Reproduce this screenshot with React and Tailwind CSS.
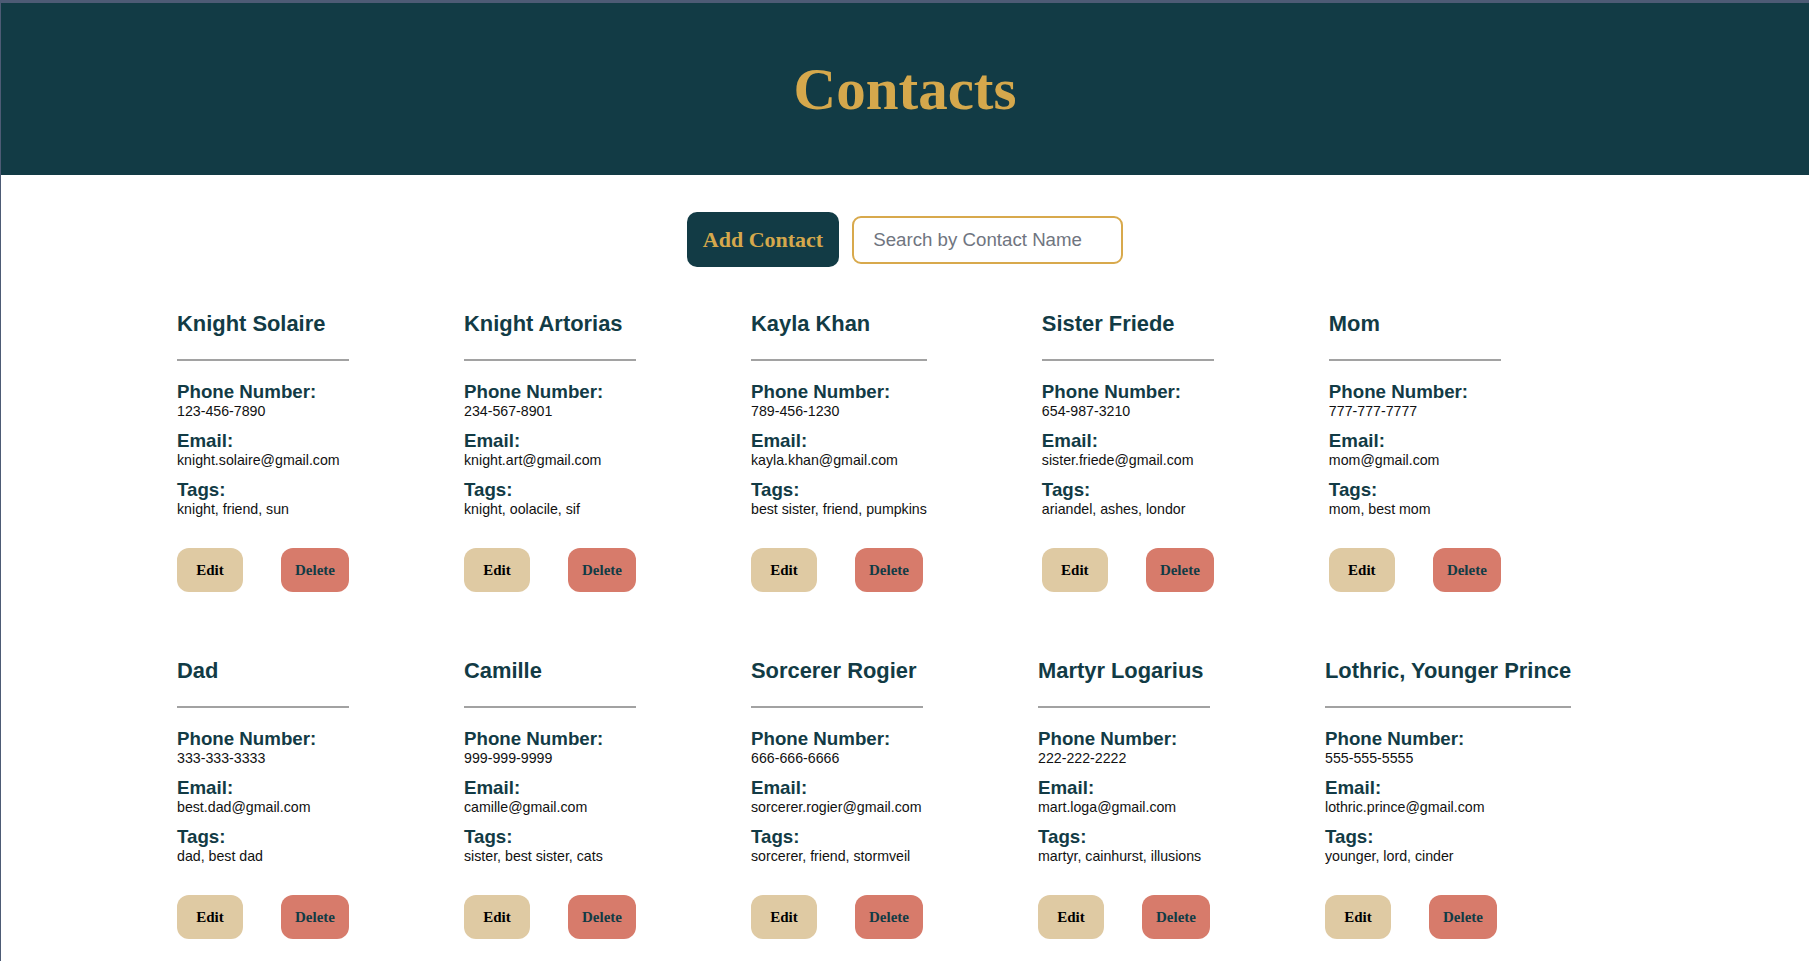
import React from 'react';

const contacts = [
  { id: 1, name: 'Knight Solaire', phone: '123-456-7890', email: 'knight.solaire@gmail.com', tags: ['knight', 'friend', 'sun'] },
  { id: 2, name: 'Knight Artorias', phone: '234-567-8901', email: 'knight.art@gmail.com', tags: ['knight', 'oolacile', 'sif'] },
  { id: 3, name: 'Kayla Khan', phone: '789-456-1230', email: 'kayla.khan@gmail.com', tags: ['best sister', 'friend', 'pumpkins'] },
  { id: 4, name: 'Sister Friede', phone: '654-987-3210', email: 'sister.friede@gmail.com', tags: ['ariandel', 'ashes', 'londor'] },
  { id: 5, name: 'Mom', phone: '777-777-7777', email: 'mom@gmail.com', tags: ['mom', 'best mom'] },
  { id: 6, name: 'Dad', phone: '333-333-3333', email: 'best.dad@gmail.com', tags: ['dad', 'best dad'] },
  { id: 7, name: 'Camille', phone: '999-999-9999', email: 'camille@gmail.com', tags: ['sister', 'best sister', 'cats'] },
  { id: 8, name: 'Sorcerer Rogier', phone: '666-666-6666', email: 'sorcerer.rogier@gmail.com', tags: ['sorcerer', 'friend', 'stormveil'] },
  { id: 9, name: 'Martyr Logarius', phone: '222-222-2222', email: 'mart.loga@gmail.com', tags: ['martyr', 'cainhurst', 'illusions'] },
  { id: 10, name: 'Lothric, Younger Prince', phone: '555-555-5555', email: 'lothric.prince@gmail.com', tags: ['younger', 'lord', 'cinder'] },
];

const Field = ({ label, value, first }) => (
  <div className={first ? 'mt-[19.5px]' : 'mt-[10px]'}>
    <h3 className="text-[18.72px] leading-[22px] font-bold text-[#123b45]">{label}</h3>
    <p className="text-[14.2px] leading-[17px] text-[#111]">{value}</p>
  </div>
);

const ContactCard = ({ contact }) => {
  return (
    <div className="flex flex-col">
      <h2 className="text-[21.9px] leading-[26px] font-bold text-[#123b45] whitespace-nowrap">{contact.name}</h2>
      <div className="mt-[22px] h-[2px] bg-[#a2a2a2]" />
      <Field first label="Phone Number:" value={contact.phone} />
      <Field label="Email:" value={contact.email} />
      <Field label="Tags:" value={contact.tags.join(', ')} />
      <div className="mt-[30.5px] flex gap-[38px]">
        <button className="w-[66px] h-[44px] rounded-[12px] bg-[#dfcaa3] text-black font-bold text-[15px] font-['Liberation_Serif',serif]">
          Edit
        </button>
        <button className="w-[68px] h-[44px] rounded-[12px] bg-[#d77b6b] text-[#123b45] font-bold text-[15px] font-['Liberation_Serif',serif]">
          Delete
        </button>
      </div>
    </div>
  );
};

export default function App() {
  return (
    <div className="min-h-screen bg-white border-t-[3px] border-l border-[#4d5b75] font-['Liberation_Sans',Arial,sans-serif]">
      {/* Header */}
      <header className="h-[172px] bg-[#123b45] flex items-center justify-center">
        <h1 className="text-[59px] leading-[59px] font-bold text-[#d5a84c] font-['Liberation_Serif',serif]">Contacts</h1>
      </header>

      {/* Controls */}
      <div className="mt-[37px] flex items-center justify-center gap-[13px]">
        <button className="h-[55px] px-4 rounded-[10px] bg-[#123b45] text-[#d5a84c] font-bold text-[22px] font-['Liberation_Serif',serif]">
          Add Contact
        </button>
        <input
          type="text"
          placeholder="Search by Contact Name"
          className="w-[271px] h-[48px] border-2 border-[#d8a94c] rounded-[9px] pl-[19px] pr-3 text-[18.7px] text-[#111] placeholder:text-[#70757f] outline-none"
        />
      </div>

      {/* Contact list */}
      <div className="mt-[44px] px-[176px] pb-10 flex flex-wrap gap-x-[115px] gap-y-[66px]">
        {contacts.map((c) => (
          <ContactCard key={c.id} contact={c} />
        ))}
      </div>
    </div>
  );
}
